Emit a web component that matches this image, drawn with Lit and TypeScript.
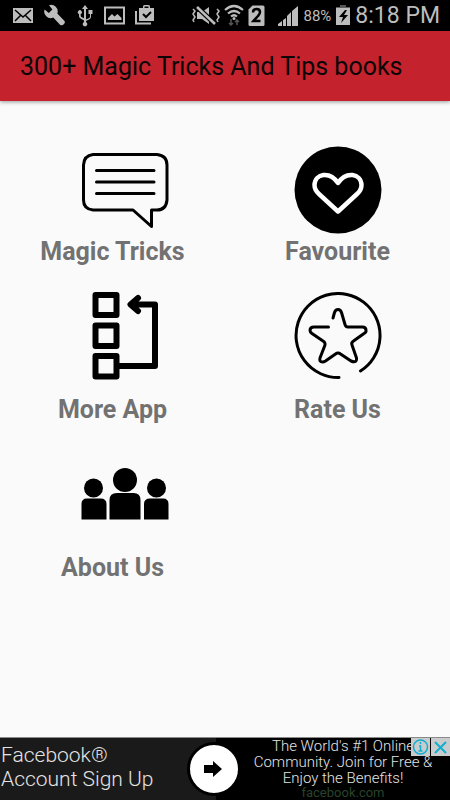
import { LitElement, html, svg, css } from "lit";
import type { SVGTemplateResult } from "lit";
import { customElement, property } from "lit/decorators.js";

@customElement("status-bar")
class StatusBar extends LitElement {
  static styles = css`
    :host {
      display: flex;
      justify-content: space-between;
      align-items: center;
      height: 31px;
      padding: 0 10px 0 12px;
      background: #000;
      color: #bdbdbd;
      font-family: Roboto, sans-serif;
    }
    .group {
      display: flex;
      align-items: center;
      gap: 10px;
    }
    .tight {
      gap: 4px;
    }
    .signal {
      margin: 0 0 0 8px;
    }
    .battery {
      font-size: 15px;
      line-height: 31px;
      padding-top: 1px;
    }
    .clock {
      padding-top: 1px;
      font-size: 23px;
      line-height: 30px;
      white-space: nowrap;
    }
    svg {
      display: block;
    }
  `;

  private glyph(width: number, shape: SVGTemplateResult, name = "") {
    return html`<svg class=${name} width=${width} height="31" viewBox="0 0 ${width} 31" fill="#bdbdbd" aria-hidden="true">${shape}</svg>`;
  }

  render() {
    return html`
      <div class="group">
        ${this.glyph(22, svg`<path d="M1 8h20v15H1z"/><path d="M3 10l8 7 8-7M3 21l6-6M19 21l-6-6" fill="none" stroke="#000" stroke-width="1.5"/>`)}
        ${this.glyph(21, svg`<path d="M5 5.300a6.500 6.500 0 0 1 8.300 8.300L20.500 21q1 1.500-.7 3.200t-3.500.7L9.200 17.600A6.500 6.500 0 0 1 .6 9.400L4.800 13l3.600-3.500z"/>`)}
        ${this.glyph(19, svg`<path d="M10 5l3 4h-2v10.500l3.200-1.500q.8-.5.800-1.500v-2.500h-1.500v-4h4v4H16v3q0 1.500-1.500 2.300L11 21v1a2.300 2.300 0 1 1-2 0v-1.500L5.500 18.500Q4 17.500 4 16v-2a2 2 0 1 1 1.700 0v1.500q0 1 .8 1.500l2.500 1.300V9H7z"/>`)}
        ${this.glyph(21, svg`<path d="M1 7.500h19v16H1z" fill="none" stroke="#bdbdbd" stroke-width="2"/><path d="M4 20v-2l4-4 2.500 2.500 3-2.500 4 4v2z"/>`)}
        ${this.glyph(20, svg`<path d="M1 11v12.500h15" fill="none" stroke="#bdbdbd" stroke-width="2"/><path d="M4 8h4V6.500q0-1.500 1.500-1.500h4q1.500 0 1.500 1.500V8h4v13H4zM9.500 8h4V6.500h-4z" fill-rule="evenodd"/><path d="M8 14l3 3 5-5" fill="none" stroke="#000" stroke-width="2"/>`)}
      </div>
      <div class="group tight">
        ${this.glyph(29, svg`<path d="M6 12h5l7-5v17l-7-5H6z"/><path d="M6 7l18 17" stroke="#000" stroke-width="5"/><path d="M6 7l18 17" stroke="#bdbdbd" stroke-width="2.500"/><path d="M2 9l2 2-2 3 2 3-2 3 1 2M26 9l2 2-2 3 2 3-2 3 1 2" fill="none" stroke="#bdbdbd" stroke-width="1.500"/>`)}
        ${this.glyph(20, svg`<path d="M1 10q9-8 18 0M4 13.500q6-5 12 0M7 16.500q3-2.500 6 0" fill="none" stroke="#bdbdbd" stroke-width="2.200"/><circle cx="10" cy="18.500" r="1.500"/><path d="M7 19v6m-2-2l2 2 2-2M13 25v-5m-2 2l2-2 2 2" fill="none" stroke="#555" stroke-width="1.500"/>`)}
        ${this.glyph(17, svg`<path d="M4.500 5.500H15q1.500 0 1.500 1.500v17.500q0 1.500-1.500 1.500H2q-1.500 0-1.500-1.500V9.500z"/><path d="M5 12.500q0-3.500 3.500-3.500t3.500 3q0 2-2 4l-4.500 5H12.500" fill="none" stroke="#000" stroke-width="2.500"/>`)}
        ${this.glyph(22, svg`<path d="M1 26v-2l4-3v5zM6 26v-6l3-2v8zM10 26V16l4-4v14zM15 26V11l6-5v20z"/>`, "signal")}
        <span class="battery">88%</span>
        ${this.glyph(16, svg`<path d="M5 5h6v2H5z" fill="#555"/><path d="M1 7.500h14V25H1z"/><path d="M10 10l-6 7h4l-2 6 7-8H9l3-5z" fill="#000"/>`)}
        <span class="clock">8:18 PM</span>
      </div>
    `;
  }
}

@customElement("menu-tile")
class MenuTile extends LitElement {
  @property() label = "";
  @property({ attribute: false }) icon: unknown = null;
  @property({ type: Boolean, reflect: true }) compact = false;
  @property({ type: Boolean, reflect: true }) inset = false;

  static styles = css`
    :host {
      display: block;
    }
    .tile {
      display: flex;
      flex-direction: column;
      align-items: center;
      gap: 12px;
      width: 100%;
      padding: 0;
      border: 0;
      background: none;
      color: #727272;
      font: bold 25px/36px Roboto, sans-serif;
      cursor: pointer;
    }
    :host([compact]) .tile {
      gap: 0;
    }
    .icon {
      display: block;
      width: 88px;
      height: 88px;
    }
    :host([inset]) .icon {
      margin-left: 24px;
    }
  `;

  render() {
    return html`
      <button class="tile" type="button">
        <svg class="icon" viewBox="0 0 88 88" aria-hidden="true">${this.icon}</svg>
        <span>${this.label}</span>
      </button>
    `;
  }
}

@customElement("ad-banner")
class AdBanner extends LitElement {
  static styles = css`
    :host {
      position: relative;
      display: grid;
      grid-template-columns: 48% 52%;
      height: 62px;
      border-top: 1px solid #8a8a8a;
      background: #000;
      color: #e4e4e4;
      font-family: Roboto, sans-serif;
      overflow: hidden;
    }
    a {
      color: inherit;
      text-decoration: none;
    }
    .headline {
      padding: 5px 0 0 1px;
      background: #1a1a1a;
      font-size: 21px;
      font-weight: 300;
      line-height: 24px;
    }
    .copy {
      padding-left: 20px;
      font-size: 15px;
      font-weight: 300;
      line-height: 16px;
      text-align: center;
      white-space: nowrap;
    }
    .domain {
      display: block;
      color: #28432b;
      font-size: 13px;
      font-weight: 400;
      line-height: 14px;
    }
    .go {
      position: absolute;
      left: 48%;
      top: 4px;
      width: 54px;
      height: 54px;
      margin-left: -29px;
      padding: 0;
      border: 3px solid #000;
      border-radius: 50%;
      background: #fff;
    }
    .corner {
      position: absolute;
      top: 0;
      right: 0;
      display: flex;
      gap: 1px;
    }
    .corner button {
      width: 19px;
      height: 18px;
      padding: 0;
      border: 0;
      background: #c9cccd;
    }
    svg {
      display: block;
      margin: auto;
    }
  `;

  render() {
    return html`
      <a class="headline" href="#signup">Facebook®<br />Account Sign Up</a>
      <a class="copy" href="#facebook">
        The World's #1 Online<br />Community. Join for Free &amp;<br />Enjoy the Benefits!
        <span class="domain">facebook.com</span>
      </a>
      <button class="go" type="button" aria-label="Open">
        <svg width="48" height="48" viewBox="0 0 48 48"><path d="M14 20h9v-4l9 8-9 8v-4h-9z" /></svg>
      </button>
      <div class="corner">
        <button type="button" aria-label="Ad choices">
          <svg width="19" height="18" viewBox="0 0 19 18" fill="none" stroke="#12aed0" stroke-width="1.500">
            <circle cx="9.500" cy="9" r="7" /><path d="M9.500 4v2M8 8h1.500v5M7.500 13h4" />
          </svg>
        </button>
        <button type="button" aria-label="Close ad">
          <svg width="19" height="18" viewBox="0 0 19 18" fill="none" stroke="#12aed0" stroke-width="2">
            <path d="M4 4l11 11M15 4L4 15" />
          </svg>
        </button>
      </div>
    `;
  }
}

const speech = svg`<g fill="none" stroke="#000" stroke-width="3" stroke-linecap="round" stroke-linejoin="round">
  <path d="M12 8.500H76Q86 9.500 86 19V54Q85 64 76 64H70.500V80.500L52 64H12Q2.500 63 2.500 54V19Q3 9.500 12 8.500z"/>
  <path d="M15.500 24.500H73M15.500 36H73M15.500 47.500H73"/></g>`;

const heart = svg`<circle cx="44" cy="44" r="43.500"/>
  <path d="M44 37C36 25 21 27 20.500 39Q20.500 44 25 48L44 65.500 63 48Q67.500 44 67.500 39C67 27 52 25 44 37z" fill="none" stroke="#fff" stroke-width="4.500" stroke-linejoin="round"/>`;

const stack = svg`<g fill="none" stroke="#000" stroke-width="6" stroke-linejoin="round" stroke-linecap="round">
  <path d="M14.500 3H35.500V23H14.500zM14.500 33.500H35.500V54H14.500zM14.500 64H35.500V84.500H14.500z"/>
  <path d="M37 74H74V12.500H50M57 6L49.500 12.500 57 19"/></g>`;

const star = svg`<g fill="none" stroke="#000" stroke-width="3" stroke-linecap="round" stroke-linejoin="round">
  <path d="M45 85.500A42 42 0 1 1 66.500 79"/>
  <path d="M34.500 35H20Q16 35 16 38.500 16 40 18 41.500L29 49Q31.500 50.500 31 53L26 66Q25 70 28.500 70 30 70 31.500 69L41.500 62Q44 60 46.500 62L57 69Q63 71.500 62.500 66L58 53Q57 50.500 59.500 49L70 41.500Q72.500 40 72 38.500 72 35 68.500 35H54Q51.500 35 51 32.500L47.500 20.500Q46.500 17.500 44 17.500T40.500 20.500L39 26"/></g>`;

const people = svg`<circle cx="44" cy="30" r="12"/><circle cx="12.500" cy="38" r="9.500"/><circle cx="75.500" cy="38" r="9.500"/>
  <path d="M28.500 69.500V50Q28.500 43 36 43H52.500Q59.500 43 59.500 50V69.500zM.5 69.500V54Q.5 48.500 6 48.500H19.500Q25.500 48.500 25.500 54V69.500zM63 69.500V54Q63 48.500 69 48.500H82Q87.500 48.500 87.500 54V69.500z"/>`;

@customElement("app-root")
class AppRoot extends LitElement {
  static styles = css`
    :host {
      display: flex;
      flex-direction: column;
      min-height: 100vh;
      background: #fafafa;
      font-family: Roboto, sans-serif;
    }
    .appbar {
      padding: 2px 20px 0;
      background: #c4222c;
      box-shadow: 0 1px 4px rgba(0, 0, 0, 0.4);
      color: #0c0506;
    }
    h1 {
      margin: 0;
      font-size: 25px;
      font-weight: 400;
      line-height: 68px;
      white-space: nowrap;
    }
    .menu {
      flex: 1;
      display: grid;
      grid-template-columns: 1fr 1fr;
      align-content: start;
      row-gap: 22px;
      padding: 45px 0 24px;
    }
  `;

  render() {
    return html`
      <status-bar></status-bar>
      <header class="appbar"><h1>300+ Magic Tricks And Tips books</h1></header>
      <main class="menu">
        <menu-tile label="Magic Tricks" .icon=${speech} compact inset></menu-tile>
        <menu-tile label="Favourite" .icon=${heart} compact></menu-tile>
        <menu-tile label="More App" .icon=${stack} inset></menu-tile>
        <menu-tile label="Rate Us" .icon=${star}></menu-tile>
        <menu-tile label="About Us" .icon=${people} inset></menu-tile>
      </main>
      <ad-banner></ad-banner>
    `;
  }
}
